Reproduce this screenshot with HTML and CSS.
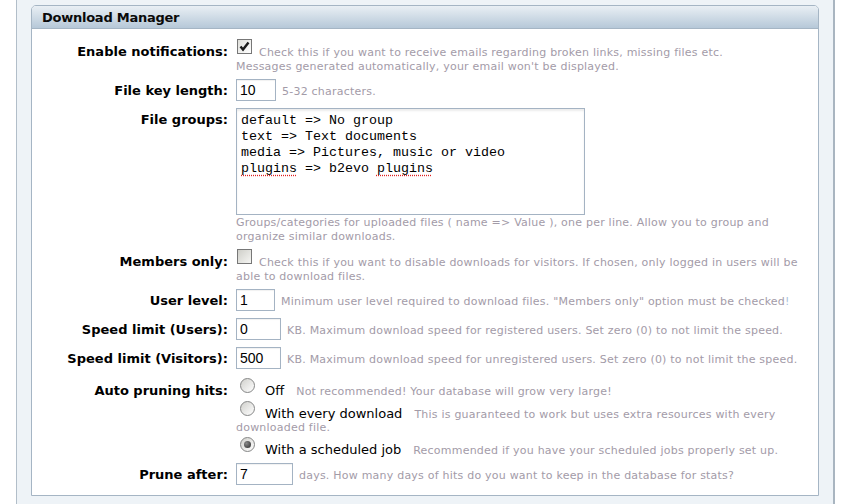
FILE: index.html
```html
<!DOCTYPE html>
<html>
<head>
<meta charset="utf-8">
<title>Download Manager</title>
<link rel="stylesheet" href="styles.css">
</head>
<body>
<div class="outer">
  <div class="fieldset">
    <div class="legend">Download Manager</div>
    <div class="fbody">
      <div class="row r-check">
        <div class="label">Enable notifications:</div>
        <div class="field"><span class="cb checked"><svg viewBox="0 0 15 15" width="15" height="15"><path d="M3.5 7.5 L6 10.5 L11.5 3.5" fill="none" stroke="#1a1a1a" stroke-width="2.4"/></svg></span><span class="note">Check this if you want to receive emails regarding broken links, missing files etc.<br>Messages generated automatically, your email won't be displayed.</span></div>
      </div>
      <div class="row r-input">
        <div class="label">File key length:</div>
        <div class="field"><span class="inp w40">10</span><span class="note">5-32 characters.</span></div>
      </div>
      <div class="row r-groups">
        <div class="label">File groups:</div>
        <div class="field">
          <div class="textarea"><div>default =&gt; No group</div><div>text =&gt; Text documents</div><div>media =&gt; Pictures, music or video</div><div><span class="spell">plugins</span> =&gt; b2evo <span class="spell">plugins</span></div></div>
          <div class="note block">Groups/categories for uploaded files ( name =&gt; Value ), one per line. Allow you to group and organize similar downloads.</div>
        </div>
      </div>
      <div class="row r-check">
        <div class="label">Members only:</div>
        <div class="field"><span class="cb"></span><span class="note">Check this if you want to disable downloads for visitors. If chosen, only logged in users will be able to download files.</span></div>
      </div>
      <div class="row r-input">
        <div class="label">User level:</div>
        <div class="field"><span class="inp w39">1</span><span class="note">Minimum user level required to download files. "Members only" option must be checked<span class="bang">!</span></span></div>
      </div>
      <div class="row r-input">
        <div class="label">Speed limit (Users):</div>
        <div class="field"><span class="inp w45">0</span><span class="note">KB. Maximum download speed for registered users. Set zero (0) to not limit the speed.</span></div>
      </div>
      <div class="row r-input r-before-radios">
        <div class="label">Speed limit (Visitors):</div>
        <div class="field"><span class="inp w45">500</span><span class="note">KB. Maximum download speed for unregistered users. Set zero (0) to not limit the speed.</span></div>
      </div>
      <div class="row r-radios">
        <div class="label">Auto pruning hits:</div>
        <div class="field">
          <div class="ropt"><span class="radio"></span><span class="rlabel">Off</span><span class="note">Not recommended! Your database will grow very large!</span></div>
          <div class="ropt"><span class="radio"></span><span class="rlabel">With every download</span><span class="note">This is guaranteed to work but uses extra resources with every downloaded file.</span></div>
          <div class="ropt"><span class="radio on"></span><span class="rlabel">With a scheduled job</span><span class="note">Recommended if you have your scheduled jobs properly set up.</span></div>
        </div>
      </div>
      <div class="row r-input">
        <div class="label">Prune after:</div>
        <div class="field"><span class="inp w57">7</span><span class="note">days. How many days of hits do you want to keep in the database for stats?</span></div>
      </div>
    </div>
  </div>
</div>
</body>
</html>
```

FILE: styles.css
```css
html, body {
  margin: 0;
  padding: 0;
  background: #ffffff;
  font-family: "DejaVu Sans", Verdana, sans-serif;
  color: #000;
}

.outer {
  margin-left: 16px;
  width: 819px;
  height: 504px;
  box-sizing: border-box;
  background: #eef3f7;
  border-left: 1px solid #b2bec9;
  border-right: 2px solid #a9b5c0;
  padding: 5px 14px 0 14px;
}

.fieldset {
  width: 788px;
  height: 491px;
  box-sizing: border-box;
  border: 1px solid #a5b5c4;
  border-radius: 5px 5px 0 0;
  background: #ffffff;
}

.legend {
  height: 23px;
  box-sizing: border-box;
  border-bottom: 1px solid #a5b5c4;
  border-radius: 4px 4px 0 0;
  background: linear-gradient(#e9eff4, #b6c8d8);
  font-weight: bold;
  font-size: 13px;
  letter-spacing: -0.25px;
  line-height: 23px;
  padding-left: 10px;
  color: #0a0a0a;
}

.fbody {
  padding-top: 6px;
}

.row {
  display: grid;
  grid-template-columns: 196px 1fr;
  column-gap: 8px;
  align-items: baseline;
  margin-bottom: 7px;
}

.label {
  text-align: right;
  font-weight: bold;
  font-size: 13px;
  line-height: 16px;
}

.field {
  font-size: 11px;
  line-height: 14px;
  padding-right: 8px;
}

.note {
  font-size: 11px;
  line-height: 14px;
  letter-spacing: 0.22px;
  color: #a39ba8;
}

.note.block {
  display: block;
  margin-top: 1px;
}

.bang {
  color: #a9c4dc;
}

.r-check {
  margin-bottom: 5px;
}

.cb {
  display: inline-block;
  vertical-align: baseline;
  width: 15px;
  height: 15px;
  box-sizing: border-box;
  border: 1px solid #777777;
  background: linear-gradient(135deg, #cfcfc9, #f6f6f3);
  margin: 4px 7px 2px 1px;
  position: relative;
}

.cb svg {
  position: absolute;
  left: -1px;
  top: -1px;
}

.cb.checked {
  background: linear-gradient(135deg, #dedeD9, #ffffff);
}

.inp {
  display: inline-block;
  vertical-align: baseline;
  height: 22px;
  box-sizing: border-box;
  border: 1px solid #a4b3c3;
  box-shadow: inset 0 1px 1px rgba(0,0,0,0.06);
  font-family: "Liberation Sans", Arial, sans-serif;
  font-size: 14px;
  line-height: 20px;
  padding-left: 3px;
  margin-right: 6px;
}

.w40 { width: 40px; }
.w39 { width: 39px; }
.w45 { width: 45px; }
.w57 { width: 57px; }

.textarea {
  width: 349px;
  height: 107px;
  box-sizing: border-box;
  border: 1px solid #a4b3c3;
  box-shadow: inset 0 2px 2px rgba(0,0,0,0.08);
  font-family: "Liberation Mono", "Courier New", monospace;
  font-size: 13.33px;
  line-height: 16px;
  padding: 4px 4px;
}

.spell {
  text-decoration: underline dotted #e02020;
  text-underline-offset: 3px;
}

.r-groups {
  margin-bottom: 1px;
}

.r-before-radios {
  margin-bottom: 6px;
}

.r-radios {
  margin-bottom: 6px;
}

.ropt {
  font-size: 13px;
  line-height: 11px;
}

.ropt .note {
  margin-left: 12px;
  line-height: 13px;
}

.rlabel {
  font-size: 13px;
}

.radio {
  display: inline-block;
  vertical-align: baseline;
  width: 15px;
  height: 15px;
  box-sizing: border-box;
  border-radius: 50%;
  border: 1px solid #858686;
  background: linear-gradient(135deg, #d0d0cc, #ffffff);
  margin: 3px 10px 2px 4px;
  position: relative;
}

.radio.on::after {
  content: "";
  position: absolute;
  left: 3px;
  top: 3px;
  width: 7px;
  height: 7px;
  border-radius: 50%;
  background: radial-gradient(circle at 35% 35%, #8a8a8a, #2a2a2a);
}
```
